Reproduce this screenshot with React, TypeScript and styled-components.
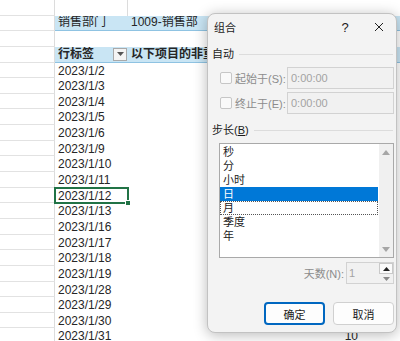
import React from "react";
import styled, { createGlobalStyle, css } from "styled-components";

// pivot rows shown in the sheet
const rows = [
  { date: "2023/1/2", count: 12 },
  { date: "2023/1/3", count: 9 },
  { date: "2023/1/4", count: 11 },
  { date: "2023/1/5", count: 8 },
  { date: "2023/1/6", count: 13 },
  { date: "2023/1/9", count: 10 },
  { date: "2023/1/10", count: 7 },
  { date: "2023/1/11", count: 12 },
  { date: "2023/1/12", count: 9 },
  { date: "2023/1/13", count: 11 },
  { date: "2023/1/16", count: 8 },
  { date: "2023/1/17", count: 10 },
  { date: "2023/1/18", count: 12 },
  { date: "2023/1/19", count: 9 },
  { date: "2023/1/28", count: 6 },
  { date: "2023/1/29", count: 7 },
  { date: "2023/1/30", count: 11 },
  { date: "2023/1/31", count: 10 },
];

const steps = ["秒", "分", "小时", "日", "月", "季度", "年"];

const App: React.FC = () => {
  return (
    <>
      <GlobalStyle />
      <Screen>
        <Sheet>
          <Gutter />
          <Cell $divider />
          <Cell $span={2} />

          <Gutter />
          <BandCell>销售部门</BandCell>
          <BandCell $span={2}>1009-销售部</BandCell>

          <Gutter />
          <Cell $span={3} />

          <Gutter />
          <BandCell $bold>
            行标签
            <FilterButton>
              <svg width="7" height="4" viewBox="0 0 7 4">
                <path d="M0 0 L7 0 L3.5 4 Z" fill="#555" />
              </svg>
            </FilterButton>
          </BandCell>
          <BandCell $bold $span={2}>
            以下项目的非重复计数
          </BandCell>

          {rows.map((r) => (
            <React.Fragment key={r.date}>
              <Gutter />
              <Cell $active={r.date === "2023/1/12"}>{r.date}</Cell>
              <Cell $right>{r.count}</Cell>
              <Cell />
            </React.Fragment>
          ))}
        </Sheet>

        <Dialog>
          <TitleBar>
            <Title>组合</Title>
            <TitleButton>?</TitleButton>
            <TitleButton>
              <svg width="10" height="10" viewBox="0 0 10 10">
                <path d="M1 1 L9 9 M9 1 L1 9" stroke="#222" strokeWidth="1" />
              </svg>
            </TitleButton>
          </TitleBar>

          <GroupHeader $top={7}>
            自动
            <GroupLine />
          </GroupHeader>
          <FieldRow $top={6}>
            <CheckBox />
            <FieldLabel>起始于(S):</FieldLabel>
            <TextBox>0:00:00</TextBox>
          </FieldRow>
          <FieldRow $top={3}>
            <CheckBox />
            <FieldLabel>终止于(E):</FieldLabel>
            <TextBox>0:00:00</TextBox>
          </FieldRow>

          <GroupHeader $top={9}>
            <span>
              步长(<u>B</u>)
            </span>
            <GroupLine />
          </GroupHeader>
          <ListBox>
            <ListItems>
              {steps.map((s) => (
                <ListItem key={s} $selected={s === "日"} $focused={s === "月"}>
                  {s}
                </ListItem>
              ))}
            </ListItems>
            <ScrollTrack>
              <svg width="8" height="5" viewBox="0 0 8 5">
                <path d="M0 5 L8 5 L4 0 Z" fill="#a6a6a6" />
              </svg>
              <svg width="8" height="5" viewBox="0 0 8 5">
                <path d="M0 0 L8 0 L4 5 Z" fill="#a6a6a6" />
              </svg>
            </ScrollTrack>
          </ListBox>

          <SpinRow>
            <FieldLabel $muted>天数(N):</FieldLabel>
            <SpinBox>
              <SpinValue>1</SpinValue>
              <SpinButtons>
                <SpinButton $raised>
                  <svg width="7" height="4" viewBox="0 0 7 4">
                    <path d="M0 4 L7 4 L3.5 0 Z" fill="#222" />
                  </svg>
                </SpinButton>
                <SpinButton>
                  <svg width="7" height="4" viewBox="0 0 7 4">
                    <path d="M0 0 L7 0 L3.5 4 Z" fill="#8a8a8a" />
                  </svg>
                </SpinButton>
              </SpinButtons>
            </SpinBox>
          </SpinRow>

          <ButtonRow>
            <DialogButton $primary>确定</DialogButton>
            <DialogButton>取消</DialogButton>
          </ButtonRow>
        </Dialog>
      </Screen>
    </>
  );
};

export default App;

const GlobalStyle = createGlobalStyle`
  html, body {
    margin: 0;
    padding: 0;
    background: #ffffff;
  }
  body {
    font-family: "Liberation Sans", "Noto Sans CJK SC", sans-serif;
    color: #262626;
  }
`;

const Screen = styled.div`
  position: relative;
  width: 400px;
  height: 341px;
  overflow: hidden;
  background: #ffffff;
`;

const Sheet = styled.div`
  display: grid;
  grid-template-columns: 55px 73px 233px 1fr;
  grid-auto-rows: 15.65px;
  font-size: 12px;
  line-height: 15px;
`;

const Gutter = styled.div`
  box-sizing: border-box;
  border-right: 1px solid #dcdcdc;
  border-bottom: 1px solid #e2e2e2;
`;

const Cell = styled.div<{
  $span?: number;
  $divider?: boolean;
  $right?: boolean;
  $active?: boolean;
}>`
  position: relative;
  box-sizing: border-box;
  padding: 1px 3px 0 3px;
  white-space: nowrap;
  grid-column: span ${(p) => p.$span ?? 1};
  text-align: ${(p) => (p.$right ? "right" : "left")};
  ${(p) => p.$divider && "border-right: 1px solid #dcdcdc;"}
  ${(p) =>
    p.$active &&
    css`
      z-index: 2;
      outline: 2px solid #217346;
      outline-offset: -1px;
      &::after {
        content: "";
        position: absolute;
        right: -3px;
        bottom: -3px;
        width: 4px;
        height: 4px;
        background: #217346;
        border: 1px solid #ffffff;
      }
    `}
`;

const BandCell = styled.div<{ $span?: number; $bold?: boolean }>`
  box-sizing: border-box;
  display: flex;
  align-items: center;
  justify-content: space-between;
  padding: 0 1px 0 3px;
  white-space: nowrap;
  overflow: hidden;
  grid-column: span ${(p) => p.$span ?? 1};
  background: #c9e5f4;
  border-bottom: 1px solid #8fc3e2;
  font-weight: ${(p) => (p.$bold ? 700 : 400)};
`;

const FilterButton = styled.span`
  box-sizing: border-box;
  display: flex;
  align-items: center;
  justify-content: center;
  width: 14px;
  height: 13px;
  background: #f4f4f4;
  border: 1px solid #a9a9a9;
`;

const Dialog = styled.div`
  position: absolute;
  left: 207px;
  top: 13px;
  box-sizing: border-box;
  width: 190px;
  height: 320px;
  display: flex;
  flex-direction: column;
  background: #f3f3f3;
  border: 1px solid #c2c2c2;
  border-radius: 8px;
  box-shadow: 0 2px 14px rgba(0, 0, 0, 0.28);
  font-family: "Liberation Sans", "Noto Sans CJK SC", sans-serif;
  font-size: 11px;
  color: #1b1b1b;
`;

const TitleBar = styled.div`
  display: flex;
  align-items: center;
  height: 26px;
  padding-left: 6px;
`;

const Title = styled.div`
  flex: 1;
`;

const TitleButton = styled.div`
  width: 34px;
  height: 26px;
  display: flex;
  align-items: center;
  justify-content: center;
  font-size: 13px;
`;

const GroupHeader = styled.div<{ $top: number }>`
  display: flex;
  align-items: center;
  gap: 5px;
  height: 14px;
  margin: ${(p) => p.$top}px 3px 0 4px;
  line-height: 14px;

  u {
    text-decoration: underline;
    text-underline-offset: 1px;
  }
`;

const GroupLine = styled.div`
  flex: 1;
  height: 1px;
  background: #dcdcdc;
`;

const FieldRow = styled.div<{ $top: number }>`
  display: flex;
  align-items: center;
  height: 22px;
  margin: ${(p) => p.$top}px 2px 0 12px;
`;

const CheckBox = styled.div`
  box-sizing: border-box;
  width: 12px;
  height: 12px;
  margin-right: 3px;
  border: 1px solid #c6c6c6;
  border-radius: 2px;
  background: #f9f9f9;
`;

const FieldLabel = styled.div<{ $muted?: boolean }>`
  flex: 1;
  color: #8c8c8c;
  white-space: nowrap;
  ${(p) => p.$muted && "flex: none; margin-right: 2px;"}
`;

const TextBox = styled.div`
  box-sizing: border-box;
  width: 107px;
  height: 22px;
  padding: 0 3px;
  display: flex;
  align-items: center;
  border: 1px solid #d2d2d2;
  background: #f1f1f1;
  color: #a3a3a3;
`;

const ListBox = styled.div`
  box-sizing: border-box;
  display: flex;
  width: 175px;
  height: 115px;
  margin: 6px 0 0 11px;
  border: 1px solid #a9a9a9;
  background: #ffffff;
`;

const ListItems = styled.div`
  flex: 1;
  padding-top: 1px;
`;

const ListItem = styled.div<{ $selected?: boolean; $focused?: boolean }>`
  box-sizing: border-box;
  height: 14px;
  line-height: 14px;
  padding-left: 3px;
  margin-right: 1px;
  ${(p) => p.$selected && "background: #0078d7; color: #ffffff;"}
  ${(p) => p.$focused && "border: 1px dotted #555; line-height: 12px; padding-left: 2px;"}
`;

const ScrollTrack = styled.div`
  width: 14px;
  display: flex;
  flex-direction: column;
  align-items: center;
  justify-content: space-between;
  padding: 6px 0 5px;
  background: #f0f0f0;
`;

const SpinRow = styled.div`
  display: flex;
  align-items: center;
  justify-content: flex-end;
  height: 22px;
  margin: 4px 2px 0 0;
`;

const SpinBox = styled.div`
  box-sizing: border-box;
  display: flex;
  width: 48px;
  height: 22px;
  border: 1px solid #d2d2d2;
  background: #f1f1f1;
`;

const SpinValue = styled.div`
  flex: 1;
  padding-left: 2px;
  display: flex;
  align-items: center;
  color: #a3a3a3;
`;

const SpinButtons = styled.div`
  display: flex;
  flex-direction: column;
  width: 14px;
`;

const SpinButton = styled.div<{ $raised?: boolean }>`
  box-sizing: border-box;
  flex: 1;
  display: flex;
  align-items: center;
  justify-content: center;
  ${(p) => p.$raised && "background: #fbfbfb; border: 1px solid #c9c9c9;"}
`;

const ButtonRow = styled.div`
  display: flex;
  justify-content: flex-end;
  gap: 8px;
  margin: 18px 2px 0 0;
`;

const DialogButton = styled.div<{ $primary?: boolean }>`
  box-sizing: border-box;
  width: 61px;
  height: 23px;
  display: flex;
  align-items: center;
  justify-content: center;
  background: #fdfdfd;
  border-radius: 4px;
  border: ${(p) => (p.$primary ? "2px solid #0067c0" : "1px solid #d0d0d0")};
`;
